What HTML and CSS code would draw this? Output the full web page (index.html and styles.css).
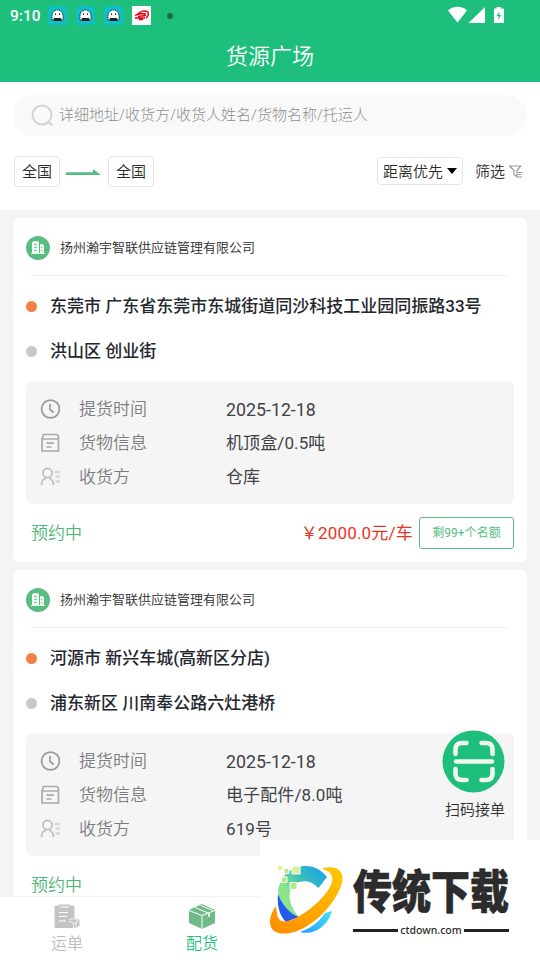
FILE: index.html
```html
<!DOCTYPE html>
<html lang="zh-CN">
<head>
<meta charset="utf-8">
<title>货源广场</title>
<link rel="stylesheet" href="styles.css">
</head>
<body>
<svg class="defs" width="0" height="0">
  <symbol id="face" viewBox="0 0 19 19"><rect width="19" height="19" rx="4" fill="#10bfc6"/><path d="M4 14V10a5.500 6 0 0 1 11 0v4z" fill="#fff" stroke="#222" stroke-width="1" stroke-dasharray="1.300 .7"/><path d="M6 12h7l.7 3H5.300z" fill="#222"/><path d="M7.500 7.500V9M11.500 7.500V9" stroke="#222"/></symbol>
  <symbol id="building" viewBox="0 0 24 24"><circle cx="12" cy="12" r="12" fill="#5abb83"/><path d="M6 17V6.500L8 5h3.500L13 6.500V17zM14 17V8h2.500L18 9.500V17z" fill="#effaf3"/><path d="M5 17.500h14" stroke="#effaf3"/><path d="M8 8.500h3M8 11.500h3M8 14.500h3M15 11.500h1.500M15 14.500h1.500" stroke="#5abb83" stroke-width=".8"/></symbol>
  <symbol id="clock" viewBox="0 0 20 20"><circle cx="10.500" cy="10" r="8.900"/><path d="M10 5v5.500l3.500 3"/></symbol>
  <symbol id="goods" viewBox="0 0 20 20"><path d="M2 6 3.500 1.500H17L18.500 3v15H2zM2 6h16.500M6.500 10.200H14M6.500 14h5"/></symbol>
  <symbol id="person" viewBox="0 0 20 20"><circle cx="7.500" cy="6" r="4.600"/><path d="M1.500 18c0-4 2-6 4.500-7.200M9 10.800C11.500 12 13.500 14 13.500 18"/><path d="M14.500 5H20M15.500 9.500H20M15.500 14.500H20" stroke-width="2.600" opacity=".5"/></symbol>
</svg>
<div class="phone">
  <header class="top">
    <div class="status">
      <span class="time">9:10</span>
      <svg class="app"><use href="#face"/></svg>
      <svg class="app"><use href="#face"/></svg>
      <svg class="app"><use href="#face"/></svg>
      <svg class="app" viewBox="0 0 19 19"><path fill="#fff" d="M0 0h19v19H0z"/><path d="M6 8C8 5 13 4 16 6c1 2 0 5-2 6M3 9.500c3-2 7-2 10-1.500M3 12h10M6 10.500l8-1M8 7.500l6 .5M7 13.500h4" fill="none" stroke="#e60012" stroke-width="1.500"/></svg>
      <i class="dot"></i>
      <svg class="signals" viewBox="0 0 57 18"><path d="M0 4.500C5-.5 14-.5 19 4.500L9.500 16.500zM20.500 17 37 1v16z" fill="#fff"/><path d="M46 2.500h2.500V1h4.500v1.500h2.500q.5 0 .5.500v13.500q0 .5-.5.500h-9q-.5 0-.5-.5V3q0-.5.500-.5z" fill="#fff"/><path d="m51.500 5.500-3 4.500h2.200l-.7 4 3.300-5h-2.200z" fill="#1ebf7c"/></svg>
    </div>
    <h1>货源广场</h1>
  </header>
  <section class="tools">
    <div class="search">
      <svg viewBox="0 0 23 23"><circle cx="11" cy="11" r="9.500" fill="none" stroke="#d4d4d4" stroke-width="2"/><path d="m17 18 4.500 3.500" stroke="#d0d0d0" stroke-width="2"/></svg>
      <span>详细地址/收货方/收货人姓名/货物名称/托运人</span>
    </div>
    <div class="filters">
      <span class="place">全国</span>
      <svg class="arrow" viewBox="0 0 35 6"><path d="M0 3.300h27V0l8 6H0z" fill="#5abb83"/></svg>
      <span class="place">全国</span>
      <span class="sort">距离优先<i></i></span>
      <span class="filter">筛选</span>
      <svg class="funnel" viewBox="0 0 13 13"><path d="M.7 1h11L8 5.500V12L5 9.500v-4zM9 7.500h4M9.500 9.500H12M9 12h4" fill="none" stroke="#999" stroke-width="1.200"/></svg>
    </div>
  </section>
  <main>
    <article class="card">
      <div class="company"><svg><use href="#building"/></svg><span>扬州瀚宇智联供应链管理有限公司</span></div>
      <div class="route">
        <div class="stop from">东莞市 广东省东莞市东城街道同沙科技工业园同振路33号</div>
        <div class="stop">洪山区 创业街</div>
      </div>
      <div class="info">
        <div class="row"><svg><use href="#clock"/></svg><span>提货时间</span><b class="date">2025-12-18</b></div>
        <div class="row"><svg class="soft"><use href="#goods"/></svg><span>货物信息</span><b>机顶盒/0.5吨</b></div>
        <div class="row"><svg class="faint"><use href="#person"/></svg><span>收货方</span><b>仓库</b></div>
      </div>
      <div class="deal"><span class="state">预约中</span><span class="price">￥2000.0元/车</span><span class="left">剩99+个名额</span></div>
    </article>
    <article class="card">
      <div class="company"><svg><use href="#building"/></svg><span>扬州瀚宇智联供应链管理有限公司</span></div>
      <div class="route">
        <div class="stop from">河源市 新兴车城(高新区分店)</div>
        <div class="stop">浦东新区 川南奉公路六灶港桥</div>
      </div>
      <div class="info">
        <div class="row"><svg><use href="#clock"/></svg><span>提货时间</span><b class="date">2025-12-18</b></div>
        <div class="row"><svg class="soft"><use href="#goods"/></svg><span>货物信息</span><b>电子配件/8.0吨</b></div>
        <div class="row"><svg class="faint"><use href="#person"/></svg><span>收货方</span><b>619号</b></div>
      </div>
      <div class="deal"><span class="state">预约中</span></div>
    </article>
  </main>
  <nav class="tabs">
    <div class="tab">
      <svg viewBox="0 0 26 26"><path d="M2 1.500h3V.5h11v1h3q1.500 0 1.500 1.500v11l5 2v6l-5 2H2Q.5 24 .5 22.500V3Q.5 1.500 2 1.500z" fill="#c4c4c4"/><path d="M6 3h9M5 8.500h9M5 12.500h8M5 17h7" stroke="#fff" stroke-width="1.200"/><path d="m15 16 4-1.500 5 2M15 17l4.500 2v5M20.500 19l4-1.500M22 19v3" fill="none" stroke="#f4f4f4"/></svg>
      <span>运单</span>
    </div>
    <div class="tab on">
      <svg viewBox="0 0 26 26"><path d="M0 6 13 0l13 6v13l-13 6-13-6z" fill="#70ba87"/><path d="m0 6.500 13 5 13-5M6 3.500l13.500 5.700M12 1.500l12 5" fill="none" stroke="#fff" stroke-width="1"/><path d="M13 11.500V25" stroke="#d8eede" stroke-width="1.300"/><path d="M20 9v4" stroke="#fff" stroke-width="1.600"/></svg>
      <span>配货</span>
    </div>
  </nav>
  <aside class="scan">
    <svg viewBox="0 0 63 63"><circle cx="31.500" cy="31.500" r="31" fill="#1ebf7c"/><path d="M13.500 24v-4.500q0-6.500 6.500-6.500h4.500M39.500 13H44q6.500 0 6.500 6.500V24M13.500 39v4.500q0 6.500 6.500 6.500h4.500M39.500 50H44q6.500 0 6.500-6.500V39M14 31.500h36" fill="none" stroke="#f0f5f1" stroke-width="4.600" stroke-linecap="round"/></svg>
    <span>扫码接单</span>
  </aside>
  <aside class="brand">
    <svg viewBox="0 0 90 90">
      <defs>
        <linearGradient id="ring" x1="0" y1="1" x2="1" y2="0"><stop offset="0" stop-color="#ff8a00"/><stop offset="1" stop-color="#ffc800"/></linearGradient>
        <linearGradient id="arc" x1="0" y1="1" x2="1" y2="0"><stop offset="0" stop-color="#8be58a"/><stop offset=".35" stop-color="#8be58a"/><stop offset=".6" stop-color="#3dc1b4"/><stop offset="1" stop-color="#119df5"/></linearGradient>
        <linearGradient id="tail" x1="0" y1="1" x2="1" y2="0"><stop offset="0" stop-color="#2a9dfa"/><stop offset="1" stop-color="#46e2fb"/></linearGradient>
      </defs>
      <path d="M34 62C21 57 13 48 13 36 16 19 27 11 41 11c9 0 15 4 21 11l-8.500 11C46 25 37 25 32 28 21 34 23 50 34 62z" fill="url(#arc)"/>
      <path d="M13 39C17 50 25 59 34 62l-13 5C14 60 12 50 13 39z" fill="#235bf0"/>
      <path d="M35 77C49 72 55 65 60 58l7-2C63 70 50 81 35 77z" fill="url(#tail)"/>
      <path d="M56 14C70 9 80 15 77 28 72 46 52 69 32 76 15 82 5 77 5 67c0-6 3-12 6-16l1 8c1 9 9 9 19 4C48 54 64 38 67 27c2-7-3-12-11-13z" fill="url(#ring)"/>
      <path d="M13 11h4v4h-4z" fill="#e5f29b"/><path d="M27 11h8v8h-8z" fill="#dcef9e" stroke="#fff"/><path d="M19 13.500h5v5h-5zM16.500 22h5.500v5.500h-5.500zM25 27.500h7v7h-7z" fill="#b7e68b" stroke="#fff"/>
    </svg>
    <div class="wordmark"><strong>传统下载</strong><small>ctdown.com</small></div>
  </aside>
</div>
</body>
</html>
```
FILE: styles.css
```css
* { box-sizing: border-box; }
body { margin: 0; font-family: Roboto, "Noto Sans CJK SC", sans-serif; font-weight: 350; color: #2c2c2c; }
.defs { position: absolute; }
.phone { position: relative; width: 540px; height: 960px; overflow: hidden; background: #f4f4f4; display: flex; flex-direction: column; }
.top { flex: none; height: 82px; background: #1ebf7c; color: #fff; }
.status { height: 31px; display: flex; align-items: center; padding-left: 10px; }
.time { width: 38px; font-size: 15.500px; font-weight: 500; line-height: 18px; }
.app { width: 19px; height: 19px; margin-right: 9px; }
.dot { width: 6px; height: 6px; border-radius: 50%; background: #22674b; margin-left: 7px; }
.signals { width: 57px; height: 18px; margin: -2px 35px 0 auto; }
h1 { margin: 0; font-size: 22px; line-height: 51px; font-weight: 350; text-align: center; }
.tools { flex: none; height: 128px; background: #fff; padding: 13px 13px 0; }
.search { height: 41px; border-radius: 21px; background: #f9f9f9; display: flex; align-items: center; padding-left: 18px; font-size: 15px; font-weight: 300; color: #8f8f8f; }
.search svg { width: 23px; height: 23px; margin-right: 5px; }
.search span { line-height: 20px; margin-top: -2px; }
.filters { height: 32px; margin-top: 19px; display: flex; align-items: center; font-size: 15px; line-height: 22px; }
.place { width: 46px; height: 31px; border: 1px solid #e4e4e4; border-radius: 4px; text-align: center; line-height: 31px; margin-left: 1px; }
.arrow { width: 35px; height: 6px; margin: 2px 6px 0; }
.sort { width: 86px; height: 28px; border: 1px solid #e4e4e4; border-radius: 4px; margin-left: auto; padding: 2px 0 0 5px; display: flex; align-items: center; }
.sort i { margin: -2px 0 0 4px; border: 5px solid transparent; border-top: 6px solid #000; border-bottom: 0; }
.filter { margin: 2px 0 0 12px; }
.funnel { width: 13px; height: 13px; margin: 0 5px 0 4px; }
main { flex: 1; min-height: 0; overflow: hidden; padding: 8px 13px 0; }
.card { height: 344px; background: #fff; border-radius: 6px; margin-bottom: 8px; padding: 0 13px 13px; }
.company { height: 58px; margin: 0 5px 0 4px; border-bottom: 1px solid #efefef; display: flex; align-items: center; padding-top: 3px; font-size: 13px; }
.company svg { width: 24px; height: 24px; margin: 0 10px 0 -4px; }
.company span { padding-bottom: 4px; }
.route { padding: 8px 0 7px; }
.stop { height: 45px; display: flex; align-items: center; font-size: 17px; line-height: 45px; font-weight: 500; color: #25272e; white-space: pre; }
.stop::before { content: ""; width: 11px; height: 11px; border-radius: 50%; background: #c8c8c8; margin-right: 13px; }
.stop.from::before { background: #f77d43; }
.info { height: 123px; background: #f5f5f5; border-radius: 6px; padding: 11px 14px 10px; }
.row { height: 34px; display: flex; align-items: center; font-size: 17px; color: #7c7d84; }
.row svg { width: 20px; height: 20px; margin-top: -1px; fill: none; stroke: #999; stroke-width: 1.700; }
.row .soft { stroke: #ababab; }
.row .faint { stroke: #bcbcbc; }
.row span { width: 147px; margin-left: 19px; padding-bottom: 4px; }
.row b { font-weight: 400; color: #414247; font-size: 17px; padding-bottom: 4px; letter-spacing: .1px; }
.row .date { font-size: 17.800px; letter-spacing: 0; padding-bottom: 0; }
.deal { height: 32px; margin-top: 13px; display: flex; align-items: center; font-size: 17px; }
.state { color: #4db679; margin-left: 5px; padding-bottom: 4px; }
.price { margin-left: auto; color: #e93323; padding-bottom: 4px; letter-spacing: .2px; font-weight: 400; }
.left { width: 95px; height: 32px; margin-left: 6px; border: 1px solid #5abb83; border-radius: 3px; color: #5abb83; font-size: 12px; line-height: 30px; text-align: center; font-weight: 400; }
.tabs { flex: none; height: 64px; background: #fff; border-top: 1px solid #f3f3f3; display: flex; }
.tab { width: 135px; display: flex; flex-direction: column; align-items: center; padding-top: 7px; font-size: 16px; line-height: 24px; color: #bbb; }
.tab svg { width: 26px; height: 26px; margin: 0 2px 2px 0; }
.tab span { margin-right: 1px; }
.tab.on { color: #1ebf7c; }
.scan { position: absolute; left: 442px; top: 730px; width: 66px; display: flex; flex-direction: column; align-items: center; font-size: 15px; line-height: 20px; }
.scan svg { width: 63px; height: 63px; margin: 0 3px 7px 0; }
.brand { position: absolute; left: 260px; top: 840px; width: 280px; height: 120px; background: #fff; display: flex; padding: 15px 0 0 5px; }
.brand > svg { width: 90px; height: 90px; }
.wordmark { width: 156px; margin-left: -2px; padding-top: 11px; }
.wordmark strong { display: block; font-family: "Noto Sans CJK SC", sans-serif; font-weight: 900; font-size: 39px; line-height: 44px; white-space: nowrap; transform: scaleY(1.180); -webkit-text-stroke: .5px #222; }
.wordmark small { display: flex; align-items: center; gap: 2px; margin-top: 10px; font: 500 10.500px/20px "Noto Sans", sans-serif; }
.wordmark small::before, .wordmark small::after { content: ""; flex: 1; height: 3px; background: #222; }
```
